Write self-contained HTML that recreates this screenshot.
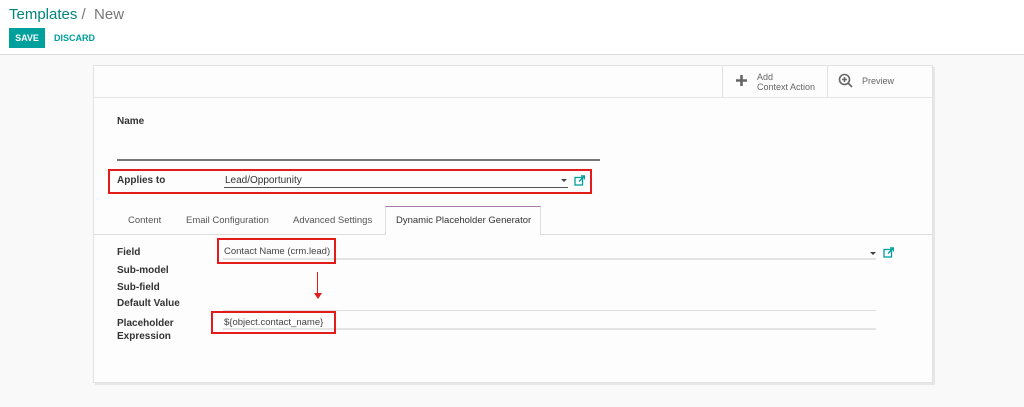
<!DOCTYPE html>
<html><head><style>
*{margin:0;padding:0;box-sizing:border-box}
body{width:1024px;height:407px;background:#f9f9f9;font-family:"Liberation Sans",Roboto,sans-serif;position:relative;overflow:hidden;color:#4c4c4c}
.a{position:absolute}
.lbl{font-size:10px;font-weight:bold;color:#333}
.red{border:2px solid #e41b1b}
</style></head><body>
<div class="a" style="left:0;top:0;width:1024px;height:55px;background:#fff;border-bottom:1px solid #ddd"></div>
<div class="a" style="left:9px;top:6px;font-size:15px;color:#00857c">Templates <span style="color:#777">/ &nbsp;New</span></div>
<div class="a" style="left:9px;top:28px;width:36px;height:20px;background:#00a09d;color:#fff;font-size:9px;font-weight:bold;text-align:center;line-height:20px">SAVE</div>
<div class="a" style="left:54px;top:28px;font-size:9px;font-weight:bold;color:#00a09d;line-height:20px">DISCARD</div>
<div class="a" style="left:93px;top:65px;width:840px;height:318px;background:#fdfdfd;border:1px solid #e2e2e2;box-shadow:2px 2px 0 #e6e6e6"></div>
<div class="a" style="left:93px;top:97px;width:839px;height:1px;background:#e6e6e6"></div>
<div class="a" style="left:722px;top:66px;width:1px;height:31px;background:#e2e2e2"></div>
<div class="a" style="left:827px;top:66px;width:1px;height:31px;background:#e2e2e2"></div>
<svg class="a" style="left:735px;top:74px" width="13" height="13"><path d="M6.5 1v11M1 6.5h11" stroke="#666" stroke-width="2.6"/></svg>
<div class="a" style="left:757px;top:72px;font-size:9px;color:#666;line-height:10px">Add<br>Context Action</div>
<svg class="a" style="left:838px;top:73px" width="16" height="16"><circle cx="6.5" cy="6.5" r="5" fill="none" stroke="#666" stroke-width="1.6"/><path d="M10 10l4 4M4 6.5h5M6.5 4v5" stroke="#666" stroke-width="1.6"/></svg>
<div class="a" style="left:862px;top:76px;font-size:9px;color:#666">Preview</div>
<div class="a lbl" style="left:117px;top:116px">Name</div>
<div class="a" style="left:117px;top:159px;width:483px;height:2px;background:#777"></div>
<div class="a red" style="left:108px;top:169px;width:484px;height:25px"></div>
<div class="a lbl" style="left:117px;top:175px">Applies to</div>
<div class="a" style="left:225px;top:175px;font-size:10px;color:#333">Lead/Opportunity</div>
<div class="a" style="left:224px;top:187px;width:344px;height:1px;background:#555"></div>
<div class="a" style="left:561px;top:179px;border:3px solid transparent;border-top:3px solid #444"></div>
<svg class="a" style="left:574px;top:175px" width="11" height="11"><rect x="1" y="2.5" width="7.5" height="7.5" fill="none" stroke="#00a09d" stroke-width="1.3"/><path d="M5 6.5L10 1.5M7 1h3.5v3.5" stroke="#00a09d" stroke-width="1.4" fill="none"/></svg>
<div class="a" style="left:94px;top:234px;width:838px;height:1px;background:#ddd"></div>
<div class="a" style="left:128px;top:215px;font-size:9.5px;color:#555">Content</div>
<div class="a" style="left:186px;top:215px;font-size:9.5px;color:#555">Email Configuration</div>
<div class="a" style="left:293px;top:215px;font-size:9.5px;color:#555">Advanced Settings</div>
<div class="a" style="left:385px;top:206px;width:156px;height:29px;background:#fdfdfd;border:1px solid #ddd;border-top:1px solid #a87ca8;border-bottom:none"></div>
<div class="a" style="left:396px;top:215px;font-size:9.5px;color:#333">Dynamic Placeholder Generator</div>
<div class="a lbl" style="left:117px;top:247px">Field</div>
<div class="a lbl" style="left:117px;top:265px">Sub-model</div>
<div class="a lbl" style="left:117px;top:282px">Sub-field</div>
<div class="a lbl" style="left:117px;top:298px">Default Value</div>
<div class="a lbl" style="left:117px;top:317px;line-height:13px">Placeholder<br>Expression</div>
<div class="a" style="left:223px;top:258px;width:653px;height:2px;background:#e4e4e4"></div>
<div class="a" style="left:223px;top:310px;width:653px;height:1px;background:#ddd"></div>
<div class="a" style="left:223px;top:328px;width:653px;height:2px;background:#e4e4e4"></div>
<div class="a red" style="left:217px;top:238px;width:119px;height:26px"></div>
<div class="a" style="left:224px;top:246px;font-size:9.5px;color:#444;white-space:nowrap">Contact Name (crm.lead)</div>
<div class="a" style="left:870px;top:252px;border:3px solid transparent;border-top:3px solid #444"></div>
<svg class="a" style="left:883px;top:247px" width="11" height="11"><rect x="1" y="2.5" width="7.5" height="7.5" fill="none" stroke="#00a09d" stroke-width="1.3"/><path d="M5 6.5L10 1.5M7 1h3.5v3.5" stroke="#00a09d" stroke-width="1.4" fill="none"/></svg>
<div class="a" style="left:317px;top:272px;width:1px;height:22px;background:#e41b1b"></div>
<div class="a" style="left:314px;top:293px;border:4px solid transparent;border-top:6px solid #e41b1b;border-bottom:0"></div>
<div class="a red" style="left:211px;top:311px;width:125px;height:23px"></div>
<div class="a" style="left:224px;top:317px;font-size:9.5px;color:#444">${object.contact_name}</div>
</body></html>
